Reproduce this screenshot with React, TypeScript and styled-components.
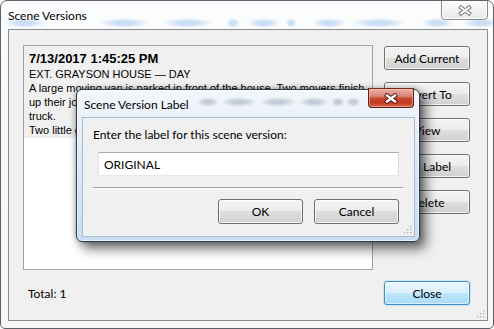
import React from "react";
import styled, { createGlobalStyle, css } from "styled-components";

const GlobalStyle = createGlobalStyle`
  html, body { margin: 0; padding: 0; background: #ffffff; }
  body { font-family: "Segoe UI", Lato, "Noto Sans", sans-serif; }
  *, *::before, *::after { box-sizing: border-box; }
`;

const UI_FONT = `"Segoe UI", Lato, "Noto Sans", sans-serif`;

const Window = styled.div`
  position: relative;
  width: 494px;
  height: 329px;
  border: 1px solid #5d6167;
  border-radius: 7px 7px 5px 5px;
  background: linear-gradient(180deg, #fbfcfd 0%, #f4f6f8 100%);
  display: flex;
  flex-direction: column;
  padding: 0 5px 7px 7px;
  overflow: hidden;
`;

/* blurred content seen through the glass frame */
const GlassStrip = styled.div<{ $left: number; $top: number; $h: number }>`
  position: absolute;
  left: ${(p) => p.$left}px;
  top: ${(p) => p.$top}px;
  height: ${(p) => p.$h}px;
  display: flex;
  pointer-events: none;
  z-index: 0;
`;

const GlassBlob = styled.span<{ $gap: number; $w: number; $color: string }>`
  display: block;
  margin-left: ${(p) => p.$gap}px;
  width: ${(p) => p.$w}px;
  height: 100%;
  background: radial-gradient(
    ellipse closest-side at center,
    ${(p) => p.$color} 0%,
    ${(p) => p.$color} 35%,
    rgba(255, 255, 255, 0) 100%
  );
`;

const TitleBar = styled.div`
  position: relative;
  z-index: 1;
  height: 28px;
  flex: 0 0 28px;
  display: flex;
  align-items: center;
  justify-content: space-between;
`;

const Title = styled.span`
  font: 12px ${UI_FONT};
  color: #000;
  padding-top: 1px;
`;

const CaptionButton = styled.div<{ $active?: boolean }>`
  align-self: flex-start;
  display: flex;
  align-items: center;
  justify-content: center;
  border-radius: 0 0 4px 4px;
  ${(p) =>
    p.$active
      ? css`
          width: 46px;
          height: 20px;
          margin-top: -2px;
          margin-right: 1px;
          border: 1px solid #5e1f14;
          border-top-color: #7a2a1c;
          background: linear-gradient(
            180deg,
            #eab0a2 0%,
            #d98373 40%,
            #c84a31 52%,
            #c23a20 75%,
            #d8694f 100%
          );
          box-shadow: inset 0 0 0 1px rgba(255, 210, 200, 0.45);
        `
      : css`
          width: 47px;
          height: 20px;
          margin-top: -1px;
          border: 1px solid #8a8a8a;
          background: linear-gradient(180deg, #fdfdfd 0%, #f1f1f1 55%, #e9e9e9 100%);
          box-shadow: inset 0 0 0 1px rgba(255, 255, 255, 0.9);
        `}
`;

const Client = styled.div`
  position: relative;
  z-index: 1;
  flex: 1;
  border: 1px solid #8c8c8c;
  background: #f0f0f0;
  display: grid;
  grid-template-columns: 350px 86px;
  grid-template-rows: 225px 24px;
  column-gap: 11px;
  row-gap: 11px;
  padding: 15px 0 0 14px;
`;

const ListBox = styled.div`
  border: 1px solid #a3a3a3;
  background: #fff;
  overflow: hidden;
`;

const ListItem = styled.div`
  background: #f0f0f0;
  padding: 4px 3px 0 5px;
  height: 92px;
  overflow: hidden;
  font-family: "Liberation Sans", Arial, sans-serif;
  color: #000;
`;

const ItemDate = styled.div`
  font-weight: bold;
  font-size: 13px;
  line-height: 17px;
`;

const ItemLine = styled.div`
  font-size: 11px;
  line-height: 14px;
  white-space: nowrap;
`;

const ButtonColumn = styled.div`
  display: flex;
  flex-direction: column;
  gap: 12px;
  padding-top: 1px;
`;

const WinButton = styled.button<{ $default?: boolean; $w?: number; $h?: number }>`
  width: ${(p) => p.$w ?? 86}px;
  height: ${(p) => p.$h ?? 24}px;
  padding: 0;
  margin: 0;
  font: 12px ${UI_FONT};
  color: #000;
  border-radius: 3px;
  ${(p) =>
    p.$default
      ? css`
          border: 1px solid #3a8fc4;
          background: linear-gradient(
            180deg,
            #eaf6fd 0%,
            #d9f0fc 49%,
            #bee6fd 50%,
            #a8daf6 100%
          );
          box-shadow: inset 0 0 0 1px rgba(255, 255, 255, 0.55),
            0 0 0 0.5px rgba(80, 180, 230, 0.4);
        `
      : css`
          border: 1px solid #707070;
          background: linear-gradient(
            180deg,
            #f4f4f4 0%,
            #ececec 49%,
            #dedede 50%,
            #d2d2d2 100%
          );
          box-shadow: inset 0 0 0 1px rgba(255, 255, 255, 0.75);
        `}
`;

const TotalLabel = styled.div`
  display: flex;
  align-items: center;
  padding-left: 5px;
  font: 12px ${UI_FONT};
  color: #000;
`;

const GripBox = styled.div<{ $right: number; $bottom: number }>`
  position: absolute;
  right: ${(p) => p.$right}px;
  bottom: ${(p) => p.$bottom}px;
  width: 8px;
  height: 8px;
  display: flex;
`;

/* ---------- dialog ---------- */

const Dialog = styled.div`
  position: absolute;
  left: 75px;
  top: 88px;
  width: 344px;
  height: 153px;
  z-index: 5;
  border: 1px solid #2d3947;
  border-radius: 6px;
  background: linear-gradient(180deg, #f3f7fb 0%, #e2ecf7 35%, #c9dcf1 100%);
  box-shadow: 6px 7px 12px rgba(0, 0, 0, 0.55), 0 0 6px rgba(0, 0, 0, 0.35),
    inset 0 0 0 1px rgba(255, 255, 255, 0.6);
  display: flex;
  flex-direction: column;
  padding: 0 4px 4px 5px;
`;

const DialogTitleBar = styled.div`
  position: relative;
  z-index: 1;
  height: 27px;
  flex: 0 0 27px;
  display: flex;
  align-items: center;
  justify-content: space-between;
  padding-left: 2px;
`;

const DialogClient = styled.div`
  position: relative;
  z-index: 1;
  flex: 1;
  border: 1px solid #a9bdd2;
  background: #f0f0f0;
  display: flex;
  flex-direction: column;
`;

const Prompt = styled.div`
  margin: 9px 0 0 10px;
  font: 12px/16px ${UI_FONT};
  color: #000;
`;

const TextInput = styled.div`
  margin: 9px 15px 0 15px;
  height: 24px;
  border: 1px solid;
  border-color: #abadb3 #dbdfe6 #e3e9ef #e2e3ea;
  background: #fff;
  display: flex;
  align-items: center;
  padding-left: 5px;
  font: 12px ${UI_FONT};
  color: #000;
`;

const Separator = styled.div`
  margin: 11px 11px 0 10px;
  height: 2px;
  border-top: 1px solid #a0a0a0;
  border-bottom: 1px solid #ffffff;
`;

const DialogButtons = styled.div`
  display: flex;
  justify-content: flex-end;
  gap: 11px;
  margin-top: 10px;
  padding-right: 15px;
`;

const Grip = () => (
  <svg width="8" height="8" viewBox="0 0 8 8">
    {[
      [6, 0],
      [3, 3],
      [6, 3],
      [0, 6],
      [3, 6],
      [6, 6],
    ].map(([x, y]) => (
      <g key={`${x}-${y}`}>
        <rect x={x + 0.5} y={y + 0.5} width="1.5" height="1.5" fill="#ffffff" />
        <rect x={x} y={y} width="1.5" height="1.5" fill="#b5b5b5" />
      </g>
    ))}
  </svg>
);

const CloseGlyph = ({ active }: { active?: boolean }) => (
  <svg width="14" height="11" viewBox="0 0 14 11">
    <g strokeLinecap="square">
      <path
        d="M3 2.5 L11 8.5 M11 2.5 L3 8.5"
        stroke={active ? "#4a1208" : "#777"}
        strokeWidth={active ? 4.2 : 4}
        fill="none"
      />
      <path
        d="M3 2.5 L11 8.5 M11 2.5 L3 8.5"
        stroke="#fff"
        strokeWidth={active ? 2.4 : 2}
        fill="none"
      />
    </g>
  </svg>
);

/* [start, end] x ranges of blurred words behind the glass */
const windowGlass: [number, number][] = [
  [3, 45],
  [98, 149],
  [161, 212],
  [225, 239],
  [246, 279],
  [285, 295],
  [311, 345],
  [351, 405],
  [420, 452],
  [461, 500],
];

const dialogGlass: [number, number][] = [
  [120, 142],
  [144, 180],
  [182, 220],
  [222, 252],
  [254, 268],
  [269, 284],
];

const renderBlobs = (ranges: [number, number][], color: string) => {
  let prev = ranges[0][0];
  return ranges.map(([s, e]) => {
    const gap = s - prev;
    prev = e;
    return <GlassBlob key={s} $gap={gap} $w={e - s} $color={color} />;
  });
};

const sideButtons = ["Add Current", "Revert To", "View", "Set Label", "Delete"];

const itemLines = [
  "EXT. GRAYSON HOUSE \u2014 DAY",
  "A large moving van is parked in front of the house. Two movers finish",
  "up their job, shoving in the last boxes and closing various doors of the",
  "truck.",
  "Two little girls, about 7 and 9, ride along the sidewalk on their bikes.",
];

export default function App() {
  return (
    <>
      <GlobalStyle />
      <Window>
        <GlassStrip $left={3} $top={17} $h={10}>
          {renderBlobs(windowGlass, "rgba(120, 175, 230, 0.38)")}
        </GlassStrip>
        <TitleBar>
          <Title>Scene Versions</Title>
          <CaptionButton>
            <CloseGlyph />
          </CaptionButton>
        </TitleBar>
        <Client>
          <ListBox>
            <ListItem>
              <ItemDate>7/13/2017 1:45:25 PM</ItemDate>
              {itemLines.map((l) => (
                <ItemLine key={l}>{l}</ItemLine>
              ))}
            </ListItem>
          </ListBox>
          <ButtonColumn>
            {sideButtons.map((b) => (
              <WinButton key={b}>{b}</WinButton>
            ))}
          </ButtonColumn>
          <TotalLabel>Total: 1</TotalLabel>
          <WinButton $default>Close</WinButton>
          <GripBox $right={2} $bottom={2}>
            <Grip />
          </GripBox>
        </Client>

        <Dialog>
          <GlassStrip $left={120} $top={7} $h={10}>
            {renderBlobs(dialogGlass, "rgba(95, 115, 140, 0.3)")}
          </GlassStrip>
          <DialogTitleBar>
            <Title>Scene Version Label</Title>
            <CaptionButton $active>
              <CloseGlyph active />
            </CaptionButton>
          </DialogTitleBar>
          <DialogClient>
            <Prompt>Enter the label for this scene version:</Prompt>
            <TextInput>ORIGINAL</TextInput>
            <Separator />
            <DialogButtons>
              <WinButton $w={85} $h={25}>
                OK
              </WinButton>
              <WinButton $w={85} $h={25}>
                Cancel
              </WinButton>
            </DialogButtons>
            <GripBox $right={2} $bottom={2}>
              <Grip />
            </GripBox>
          </DialogClient>
        </Dialog>
      </Window>
    </>
  );
}
